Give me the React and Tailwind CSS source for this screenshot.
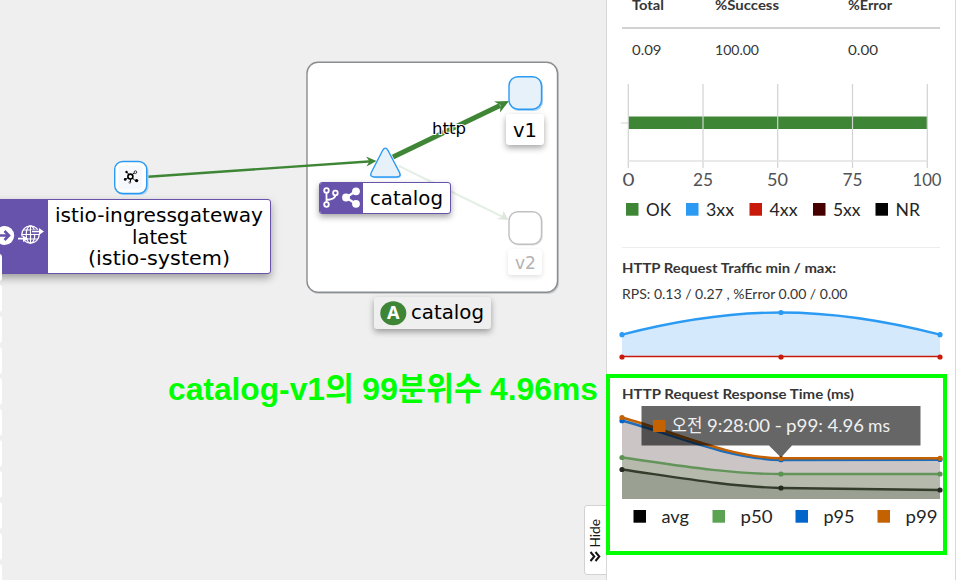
import React from "react";

const UI = "font-['Red_Hat_Text',Figtree,Lato,'Noto_Sans_CJK_KR',sans-serif]";

// Text fitted to a known advance width inside an svg.
function T({ x, y, w, size, children, fill = "#151515", weight = 400, family = "Lato, 'Noto Sans CJK KR', sans-serif" }) {
  return (
    <text x={x} y={y} textLength={w} lengthAdjust="spacingAndGlyphs" fontSize={size} fill={fill} fontWeight={weight} fontFamily={family}>
      {children}
    </text>
  );
}

function Line({ w, h, y, size, weight = 400, fill = "#363636", items }) {
  return (
    <svg width={w} height={h} className="block shrink-0 overflow-visible">
      {items.map((i) => (
        <T key={i.t} x={i.x} y={y} w={i.w} size={size} weight={weight} fill={fill}>{i.t}</T>
      ))}
    </svg>
  );
}

function GraphEdges() {
  return (
    <svg width="607" height="580" className="absolute inset-0">
      <rect x="308" y="63.5" width="251" height="230.5" rx="11" fill="#c9cbce" />
      <rect x="307" y="62.2" width="250.5" height="230" rx="11" fill="#fff" stroke="#8a8d90" strokeWidth="1.4" />
      <path d="M148 176.7L372 161.2" stroke="#3e8635" strokeWidth="2.4" />
      <path d="M376.500 161L366 156.500L369.500 161.300L366.500 166.500Z" fill="#3e8635" />
      <path d="M393 157L500 105.500" stroke="#3e8635" strokeWidth="5" />
      <path d="M509 101L494 101.500L500.500 105L500 112.500Z" fill="#3e8635" />
      <path d="M399 166L503 217" stroke="#e6efe5" strokeWidth="2" />
      <path d="M508.500 220L496.500 219L502 217L503.500 211Z" fill="#dde7dc" />
      <rect x="115.500" y="162.500" width="33" height="32.500" rx="8" fill="#a9d3f7" />
      <rect x="114.700" y="161.500" width="32" height="32" rx="8" fill="#fff" stroke="#2b9af3" strokeWidth="1.4" />
      <rect x="118.500" y="165.500" width="24" height="24" rx="3" fill="#f5f9fd" />
      <g stroke="#000" strokeWidth="1" fill="#000">
        <path d="M126.500 172L135.200 180.700M135 172.500L125.500 179.500M130.500 179V182" fill="none" />
        <circle cx="130.400" cy="176.600" r="2.500" fill="#fff" strokeWidth="1.600" />
        <circle cx="126.500" cy="172" r="1.200" stroke="none" />
        <circle cx="135.400" cy="172.200" r="1.300" fill="#fff" strokeWidth=".8" />
        <circle cx="125.200" cy="179.400" r="1.300" stroke="none" />
        <circle cx="136.600" cy="180.600" r="1.700" stroke="none" />
        <circle cx="129.800" cy="182.400" r=".9" fill="#fff" strokeWidth=".6" />
      </g>
      <path d="M383.500 150.500Q386 146.500 388.500 150.500L400.500 173Q402.500 178.300 397 178.300H376Q370.500 178 373 173Z" fill="#a9d3f7" />
      <path d="M382.700 150.300Q385.300 146 387.900 150.300L399.500 172.500Q401.500 177 396.500 177H374.500Q369.300 177 371.300 172.500Z" fill="#e7f1fa" stroke="#2b9af3" strokeWidth="1.400" />
      <rect x="509.500" y="77.500" width="33.500" height="33.500" rx="9" fill="#a9d3f7" />
      <rect x="509" y="76.700" width="32.500" height="32.500" rx="9" fill="#e7f1fa" stroke="#2b9af3" strokeWidth="1.400" />
      <rect x="509.500" y="212.500" width="33.500" height="33" rx="9" fill="#e6e6e6" />
      <rect x="509" y="211.700" width="32.500" height="32.500" rx="9" fill="#fff" stroke="#c0c0c0" strokeWidth="1.400" />
      <text x="432" y="134" textLength="34" lengthAdjust="spacingAndGlyphs" fontSize="16" fontFamily="DejaVu Sans" fill="#000" stroke="#fff" strokeWidth="2" paintOrder="stroke">http</text>
    </svg>
  );
}

function Label({ className, w, h, x, y, tw, size, fill = "#000", children }) {
  return (
    <div className={className}>
      <svg width={w} height={h} className="block">
        <T x={x} y={y} w={tw} size={size} fill={fill} family="DejaVu Sans, sans-serif">{children}</T>
      </svg>
    </div>
  );
}

// The toolbar docked at the left, of which only the buttons' right edges show.
const TOOLS = ["drag", "zoom-in", "zoom-out", "fit", "hide", "layout-1", "layout-2", "layout-3", "layout-4", "legend", "help"];

function Toolbar() {
  return (
    <div className="absolute -left-7 top-[254px] flex flex-col gap-[4px]">
      {TOOLS.map((t) => <div key={t} className="h-[27px] w-[30px] rounded-[3px] bg-white" />)}
    </div>
  );
}

function Graph() {
  return (
    <main className="relative w-[606px] shrink-0 overflow-hidden bg-[#efefef]">
      <GraphEdges />
      <div className="absolute -left-8 top-[199px] flex h-[75px] w-[303px] overflow-hidden rounded-[3px] border border-[#6753ac] bg-white shadow-[0_4px_8px_rgba(0,0,0,.35)]">
        <div className="w-[79px] shrink-0 bg-[#6753ac]">
          <svg width="79" height="73" fill="none" stroke="#fff">
            <circle cx="35.700" cy="35.500" r="9.500" fill="#fff" stroke="none" />
            <path d="M28 35.500H39M35.500 31L40 35.500L35.500 40" stroke="#6753ac" strokeWidth="2.600" />
            <circle cx="61.500" cy="34.500" r="8.700" strokeWidth="1.300" />
            <ellipse cx="61.500" cy="34.500" rx="4.300" ry="8.700" strokeWidth="1.200" />
            <path d="M61.500 26V43M54 30H69M53 34.500H70M57 39H69" strokeWidth="1.200" />
            <path d="M62 31.700H70M50 38.700H55" stroke="#6753ac" strokeWidth="4" />
            <path d="M63 31.500H71M49 38.700H54.500" strokeWidth="1.700" />
            <path d="M70 28L75 31.500L70 35ZM54 35.500L59 38.700L54 42Z" fill="#fff" stroke="none" />
          </svg>
        </div>
        <svg width="222" height="73" className="block">
          <T x="7" y="22" w="208" size="20" fill="#000" family="DejaVu Sans">istio-ingressgateway</T>
          <T x="84" y="43.500" w="55" size="20" fill="#000" family="DejaVu Sans">latest</T>
          <T x="40" y="65" w="142" size="20" fill="#000" family="DejaVu Sans">(istio-system)</T>
        </svg>
      </div>
      <Toolbar />
      <div className="absolute left-[319px] top-[182px] flex h-[32px] w-[132px] overflow-hidden rounded-[3px] border border-[#6753ac] bg-white shadow-[0_3px_6px_rgba(0,0,0,.35)]">
        <div className="w-[43px] shrink-0 bg-[#6753ac]">
          <svg width="43" height="30" fill="none" stroke="#fff">
            <path d="M6.500 8V22M15.500 11Q16 16.500 6.500 17" strokeWidth="1.800" />
            <circle cx="6.500" cy="7.500" r="2.300" fill="#6753ac" strokeWidth="1.800" />
            <circle cx="15.400" cy="10" r="2.300" fill="#6753ac" strokeWidth="1.800" />
            <circle cx="6.500" cy="21.500" r="2.300" fill="#6753ac" strokeWidth="1.800" />
            <path d="M36 8L26 14.500L36 21" strokeWidth="2.300" />
            <g fill="#fff" stroke="none"><circle cx="36" cy="8.300" r="3.900" /><circle cx="26" cy="14.500" r="3.900" /><circle cx="36" cy="20.800" r="3.900" /></g>
          </svg>
        </div>
        <svg width="87" height="30"><T x="7" y="22" w="73" size="20" fill="#000" family="DejaVu Sans">catalog</T></svg>
      </div>
      <Label className="absolute left-[506px] top-[114px] rounded-[3px] bg-white shadow-[0_3px_6px_rgba(0,0,0,.35)]" w={38} h={31} x={7} y={23} tw={24} size={20}>v1</Label>
      <Label className="absolute left-[508px] top-[249px] rounded-[3px] bg-white shadow-[0_2px_5px_rgba(0,0,0,.12)]" w={34} h={26} x={7} y={20} tw={21} size={17} fill="#b3b3b3">v2</Label>
      <div className="absolute left-[374px] top-[297px] rounded-[3px] bg-[#efefef] shadow-[0_3px_6px_rgba(0,0,0,.35)]">
        <svg width="117" height="32" className="block">
          <ellipse cx="19.300" cy="16.300" rx="13" ry="12" fill="#3e8635" />
          <T x="13" y="22.200" w="12.500" size="17" weight={700} fill="#fff" family="Noto Sans">A</T>
          <T x="37" y="21.500" w="73" size="20" fill="#000" family="DejaVu Sans">catalog</T>
        </svg>
      </div>
      <svg width="434" height="46" className="absolute left-[168px] top-[366px] overflow-visible">
        {[["catalog-v1", 0, 157], ["의", 157, 29], ["99", 194, 36], ["분위수", 230, 84], ["4.96ms", 322, 108]].map(([t, x, w]) => (
          <T key={t} x={x} y="34" w={w} size="32" weight={700} fill="#00ff00" family="'Liberation Sans','Noto Sans CJK KR',sans-serif">{t}</T>
        ))}
      </svg>
      <button className="absolute left-[584px] top-[505px] h-[70px] w-[24px] rounded-l-[3px] border border-[#d2d2d2] bg-white">
        <svg width="22" height="68" className="block">
          <g transform="translate(15 41.500) rotate(-90)"><T x="0" y="0" w="28.500" size="14">Hide</T></g>
          <path d="M5.500 46L10 49.800L14.500 46M5.500 51L10 54.800L14.500 51" transform="rotate(-90 10 50.500)" fill="none" stroke="#151515" strokeWidth="2" />
        </svg>
      </button>
    </main>
  );
}

const TICKS = [[6.300, "0", 0.5, 12], [81, "25", 71, 20], [155.700, "50", 145, 21], [230.500, "75", 220.500, 20], [305.300, "100", 290.500, 29]];
const CODES = [["#3e8635", 4, "OK", 24, 25], ["#2b9af3", 64, "3xx", 84, 28], ["#c9190b", 127.500, "4xx", 147.500, 28], ["#470000", 191, "5xx", 211, 27.500], ["#030303", 253.500, "NR", 273.500, 24.500]];
const TIMES = [["#030303", 11.500, "avg", 39.500, 27.500], ["#5ba352", 90.500, "p50", 118.500, 32], ["#0066cc", 173.500, "p95", 201.500, 31], ["#c46100", 255.500, "p99", 283.500, 32]];

function Legend({ data }) {
  return (
    <svg width="320" height="20" className="block overflow-visible">
      {data.map(([c, x, t, tx, w]) => (
        <g key={t}>
          <rect x={x} y="3" width="12.500" height="12.700" fill={c} />
          <T x={tx} y="16" w={w} size="17.800" fill="#252525">{t}</T>
        </g>
      ))}
    </svg>
  );
}

function StatusChart() {
  return (
    <svg width="320" height="108" className="block overflow-visible">
      <rect x="6" y="32.500" width="299.500" height="12.500" fill="#3e8635" />
      <g fill="none" stroke="#d2d2d2">
        {TICKS.map(([x]) => <path key={x} d={`M${x} 0V84`} strokeWidth="1.200" />)}
        <path d="M6 77H305.500" stroke="#e2e2e2" strokeWidth="1.500" />
        <path d="M-1 39H6" />
      </g>
      {TICKS.map(([x, t, tx, w]) => <T key={x} x={tx} y="102" w={w} size="18" fill="#4f5255">{t}</T>)}
    </svg>
  );
}

function Dots({ ys, fill }) {
  return ys.map((y, i) => <circle key={i} cx={i * 159} cy={y} r="2.600" fill={fill} />);
}

function TrafficChart() {
  const curve = "M0 25.700C53 12 106 3.500 159 3.500S265 12 318 25.700";
  return (
    <svg width="320" height="52" className="block overflow-visible">
      <path d={`${curve}V47H0Z`} fill="#d5e9fd" />
      <path d={curve} fill="none" stroke="#2b9af3" strokeWidth="2.400" />
      <path d="M0 47.500H318" stroke="#c9190b" strokeWidth="1.500" />
      <Dots ys={[25.700, 3.500, 25.700]} fill="#2b9af3" />
      <Dots ys={[48, 48, 48]} fill="#c9190b" />
    </svg>
  );
}

function ResponseChart() {
  const p99 = "M0 12.500C53 27 106 52.500 159 53.300L318 53.300";
  const p95 = "M0 15.500C53 30 106 54 159 55L318 54.700";
  const p50 = "M0 52.500C53 60 106 69 159 69L318 69";
  const avg = "M0 64.500C53 72 106 81.500 159 83L318 85";
  return (
    <svg width="320" height="94" className="block overflow-visible">
      <path d={`${p99}V94H0Z`} fill="#cbc6c5" />
      <path d={`${p50}V94H0Z`} fill="#b5baad" />
      <path d={`${avg}V94H0Z`} fill="#9ba192" />
      <g fill="none" strokeWidth="2.400">
        <path d={p95} stroke="#1f6cb9" />
        <path d={p99} stroke="#c46100" />
        <path d={p50} stroke="#63945a" />
        <path d={avg} stroke="#343c2b" />
      </g>
      <Dots ys={[15.700, 54.700, 54.500]} fill="#0066cc" />
      <Dots ys={[12.500, 53.500, 53.300]} fill="#c46100" />
      <Dots ys={[52.500, 69, 69]} fill="#5b9452" />
      <Dots ys={[64.500, 83, 85]} fill="#252b20" />
      <path d="M19.500 1H298.500V40.500H170L159 52.500L147 40.500H19.500Z" fill="#000" fillOpacity=".6" />
      <rect x="31" y="15" width="12.500" height="12" fill="#c46100" />
      {[["오전", 49.500, 31], ["9:28:00", 85, 63], ["-", 152.500, 7.500], ["p99:", 164, 37], ["4.96", 205.500, 36.500], ["ms", 246, 22]].map(([t, x, w]) => (
        <T key={t} x={x} y="27" w={w} size="17.800" fill="#f0f0f0">{t}</T>
      ))}
    </svg>
  );
}

export default function App() {
  return (
    <div className={`flex h-[580px] w-[967px] overflow-hidden bg-white ${UI}`}>
      <Graph />
      <aside className="flex w-[350px] shrink-0 flex-col border-x border-[#d8d8d8] bg-white">
        <section className="flex h-[374px] flex-col pl-[15px]">
          <Line w={320} h={27} y={10} size={13} weight={700} items={[{ t: "Total", x: 10, w: 32 }, { t: "%Success", x: 93, w: 64 }, { t: "%Error", x: 226, w: 44 }]} />
          <div className="h-[2px] w-[318px] shrink-0 bg-[#d2d2d2]" />
          <Line w={320} h={55} y={26} size={14} items={[{ t: "0.09", x: 10, w: 29.500 }, { t: "100.00", x: 93, w: 44 }, { t: "0.00", x: 226, w: 30 }]} />
          <StatusChart />
          <div className="pt-[8px]"><Legend data={CODES} /></div>
          <div className="mt-[27px] h-px w-[318px] shrink-0 bg-[#ededed]" />
          <Line w={320} h={38} y={25} size={13.500} weight={700} items={[{ t: "HTTP Request Traffic min / max:", x: 0, w: 214 }]} />
          <Line w={320} h={23} y={13} size={14} items={[{ t: "RPS: 0.13 / 0.27 , %Error 0.00 / 0.00", x: 0, w: 225.500 }]} />
          <TrafficChart />
        </section>
        <section className="-ml-px flex h-[181px] w-[341px] shrink-0 flex-col border-4 border-[#00ff00] pl-[12px]">
          <Line w={320} h={27} y={21} size={13.500} weight={700} items={[{ t: "HTTP Request Response Time (ms)", x: 0, w: 232 }]} />
          <ResponseChart />
          <div className="pt-2"><Legend data={TIMES} /></div>
        </section>
      </aside>
    </div>
  );
}
